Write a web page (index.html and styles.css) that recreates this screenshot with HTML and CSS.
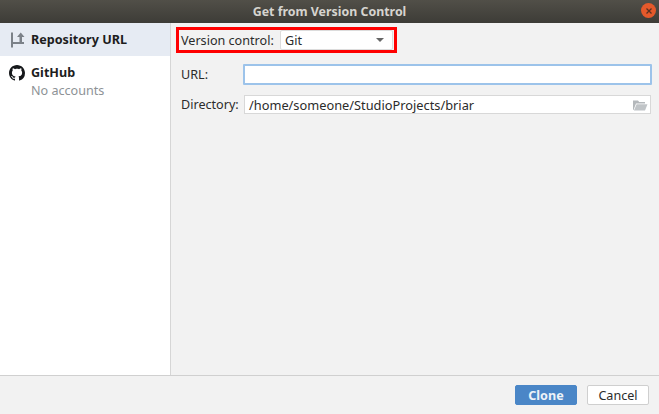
FILE: index.html
```html
<!DOCTYPE html>
<html lang="en">
<head>
<meta charset="utf-8">
<title>Get from Version Control</title>
<link rel="stylesheet" href="styles.css">
</head>
<body>
<div class="dialog">
  <header class="titlebar">
    <span class="title">Get from Version Control</span>
    <span class="close"><svg width="8" height="8" viewBox="0 0 8 8"><path d="M1.5 1.5l5 5M6.5 1.5l-5 5" stroke="#5a3020" stroke-width="1.3" fill="none"/></svg></span>
  </header>
  <div class="body">
    <aside class="sidebar">
      <div class="side-item selected">
        <svg class="side-icon" width="16" height="16" viewBox="0 0 16 16"><path d="M2 .5h2v9.5h11v2H4v3.5H2z" fill="#7b8188"/><path d="M10.5 10V5H8L11.75.5 15.5 5H13v5z" fill="#7b8188"/></svg>
        <span class="side-label">Repository URL</span>
      </div>
      <div class="side-item github">
        <svg class="side-icon" width="16" height="16" viewBox="0 0 16 16"><path fill="#16181b" d="M8 0C3.58 0 0 3.58 0 8c0 3.54 2.29 6.53 5.47 7.59.4.07.55-.17.55-.38 0-.19-.01-.82-.01-1.49-2.01.37-2.53-.49-2.69-.94-.09-.23-.48-.94-.82-1.13-.28-.15-.68-.52-.01-.53.63-.01 1.08.58 1.23.82.72 1.21 1.87.87 2.33.66.07-.52.28-.87.51-1.07-1.78-.2-3.64-.89-3.64-3.95 0-.87.31-1.59.82-2.15-.08-.2-.36-1.02.08-2.12 0 0 .67-.21 2.2.82.64-.18 1.32-.27 2-.27s1.36.09 2 .27c1.53-1.04 2.2-.82 2.2-.82.44 1.1.16 1.92.08 2.12.51.56.82 1.27.82 2.15 0 3.07-1.87 3.75-3.65 3.95.29.25.54.73.54 1.48 0 1.07-.01 1.93-.01 2.2 0 .21.15.46.55.38A8.01 8.01 0 0 0 16 8c0-4.42-3.58-8-8-8z"/></svg>
        <div class="side-text">
          <span class="side-label">GitHub</span>
          <span class="side-sub">No accounts</span>
        </div>
      </div>
    </aside>
    <main class="content">
      <div class="vcs-row">
        <label class="vcs-label">Version control:</label>
        <div class="combo"><span>Git</span><span class="caret"></span></div>
      </div>
      <div class="form-row url-row">
        <label class="form-label">URL:</label>
        <div class="input focused"></div>
      </div>
      <div class="form-row dir-row">
        <label class="form-label">Directory:</label>
        <div class="input dir">
          <span class="dir-path">/home/someone/StudioProjects/briar</span>
          <svg width="16" height="14" viewBox="0 0 16 14"><path d="M1 2.5h5l1.2 1.5H13v1.5H4L1.5 12H1z" fill="#b4b8bb"/><path d="M4.6 6.3H15.5L13 12.6H1.9z" fill="#c0c4c7"/></svg>
        </div>
      </div>
    </main>
  </div>
  <footer class="footer">
    <button class="btn primary">Clone</button>
    <button class="btn">Cancel</button>
  </footer>
</div>
</body>
</html>
```
FILE: styles.css
```css
* { box-sizing: border-box; }
html, body { margin: 0; padding: 0; }
body { font-family: "Noto Sans", "Open Sans", sans-serif; font-size: 12.6px; color: #2b2b2b; }
.dialog { width: 659px; height: 414px; display: flex; flex-direction: column; background: #f2f2f2; overflow: hidden; }
.titlebar { height: 23px; flex: none; display: flex; align-items: center; justify-content: center; position: relative; background: linear-gradient(#514f48, #3d3c37); color: #d6d4cf; font-weight: 700; font-size: 12.4px; }
.close { position: absolute; right: 3px; top: 3px; width: 15px; height: 15px; border-radius: 50%; background: #e4592b; display: flex; align-items: center; justify-content: center; }
.body { flex: 1; display: flex; min-height: 0; }
.sidebar { width: 171px; flex: none; background: #fff; border-right: 1px solid #d6d6d6; }
.side-item { display: flex; gap: 6px; padding-left: 9px; }
.selected { height: 33px; align-items: center; background: #e6ebf3; }
.github { padding-top: 9px; }
.side-icon { flex: none; }
.side-label { font-weight: 700; color: #1d1d1d; line-height: 16px; }
.side-text { display: flex; flex-direction: column; }
.side-sub { color: #8d9296; line-height: 20px; }
.content { flex: 1; padding: 4px 7px 0 5px; }
.vcs-row { width: 221px; height: 26px; border: 3px solid #f00; display: flex; align-items: center; padding-left: 2px; }
.vcs-label { white-space: nowrap; width: 99px; flex: none; }
.combo { width: 113px; height: 20px; flex: none; background: #fff; border: 1px solid #dcdcdc; border-radius: 2px; display: flex; align-items: center; justify-content: space-between; padding: 0 8px 0 4px; }
.caret { width: 0; height: 0; border: 4px solid transparent; border-top: 4px solid #666; border-bottom: 0; }
.form-row { display: flex; align-items: center; padding-left: 5px; }
.form-label { width: 62px; flex: none; }
.url-row { margin-top: 11px; }
.dir-row { margin-top: 10px; padding-right: 1px; }
.dir-row .form-label { width: 63px; }
.input { flex: 1; background: #fff; }
.focused { height: 21px; border: 2px solid #9cc3ea; border-radius: 1px; }
.dir { height: 19px; border: 1px solid #d8d8d8; display: flex; align-items: center; justify-content: space-between; padding: 0 2px 0 4px; }
.dir-path { font-size: 12.8px; }
.footer { height: 39px; flex: none; border-top: 1px solid #d0d0d0; display: flex; justify-content: flex-end; align-items: center; gap: 10px; padding: 0 10px 0 0; }
.btn { width: 62px; height: 20px; padding: 0; font: inherit; border-radius: 2px; border: 1px solid #cfcfcf; background: #fff; color: #2b2b2b; }
.primary { background: #4a86c7; border-color: #4a86c7; color: #eef3f8; font-weight: 700; }
```
